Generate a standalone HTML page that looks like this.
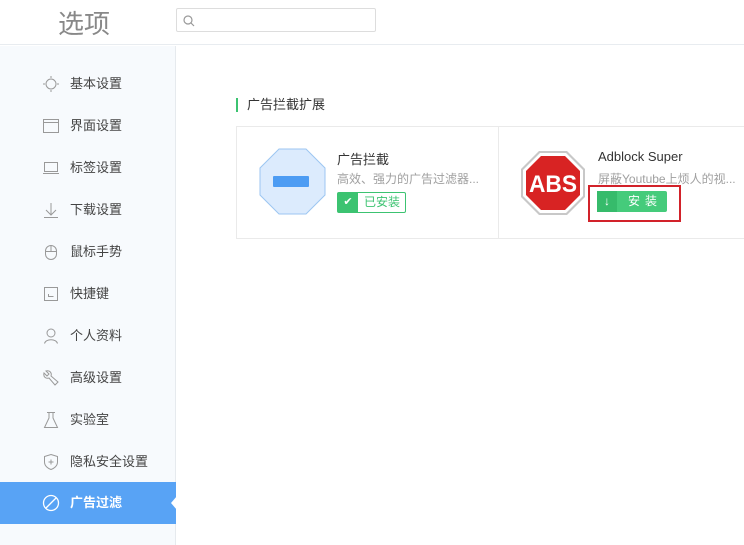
<!DOCTYPE html>
<html><head><meta charset="utf-8"><style>
*{margin:0;padding:0;box-sizing:border-box}
body{width:744px;height:545px;overflow:hidden;background:#fff;font-family:"Liberation Sans","Noto Sans CJK SC",sans-serif;position:relative}
.hdr{position:absolute;left:0;top:0;width:744px;height:45px;border-bottom:1px solid #e8ecf0;background:#fff}
.title{position:absolute;left:58px;top:4px;font-size:26px;color:#888}
.search{position:absolute;left:176px;top:8px;width:200px;height:24px;border:1px solid #ddd;border-radius:2px}
.side{position:absolute;left:0;top:46px;width:176px;height:499px;background:#f7fafd;border-right:1px solid #e6eaee}
.item{position:absolute;left:0;width:176px;height:42px;font-size:13px;color:#444;line-height:42px}
.item span{position:absolute;left:70px}
.item svg{position:absolute;left:42px;top:12px}
.item svg *{stroke:#999}
.act{background:#58a3f5;color:#fff;font-weight:bold}
.act svg *{stroke:#fff}
.arrow{position:absolute;right:-1px;top:14px;width:0;height:0;border-top:7px solid transparent;border-bottom:7px solid transparent;border-right:6px solid #fff}
.sec{position:absolute;left:236px;top:98px;font-size:13px;color:#333;padding-left:9px;border-left:2px solid #3cc371;line-height:14px}
.card{position:absolute;left:236px;top:126px;width:520px;height:113px;border:1px solid #eaeaea}
.div{position:absolute;left:261px;top:0;width:1px;height:111px;background:#eaeaea}
.name{position:absolute;font-size:13px;color:#333}
.desc{position:absolute;font-size:12px;color:#a0a0a0}
</style></head><body>
<div class="hdr"><div class="title">选项</div>
<div class="search"><svg width="14" height="14" style="position:absolute;left:5px;top:5px"><circle cx="6" cy="6" r="4" fill="none" stroke="#999" stroke-width="1.2"/><line x1="9" y1="9" x2="12" y2="12" stroke="#999" stroke-width="1.2"/></svg></div></div>
<div class="side">
<div class="item" style="top:17px"><svg width="18" height="18"><circle cx="9" cy="9" r="5" fill="none"/><g><line x1="9" y1="1" x2="9" y2="3"/><line x1="9" y1="15" x2="9" y2="17"/><line x1="1" y1="9" x2="3" y2="9"/><line x1="15" y1="9" x2="17" y2="9"/></g></svg><span>基本设置</span></div>
<div class="item" style="top:59px"><svg width="18" height="18"><rect x="1.5" y="2.5" width="15" height="13" fill="none"/><line x1="1.5" y1="5.5" x2="16.5" y2="5.5"/></svg><span>界面设置</span></div>
<div class="item" style="top:101px"><svg width="18" height="18"><rect x="2.5" y="3.5" width="13" height="9" fill="none"/><line x1="1" y1="14.5" x2="17" y2="14.5"/></svg><span>标签设置</span></div>
<div class="item" style="top:143px"><svg width="18" height="18"><path d="M9 2V14M4 9L9 14L14 9M2 16.5H16" fill="none"/></svg><span>下载设置</span></div>
<div class="item" style="top:185px"><svg width="18" height="18"><rect x="3.5" y="2.5" width="11" height="14" rx="5.5" fill="none"/><line x1="3.5" y1="8.5" x2="14.5" y2="8.5"/><line x1="9" y1="2.5" x2="9" y2="8.5"/></svg><span>鼠标手势</span></div>
<div class="item" style="top:227px"><svg width="18" height="18"><rect x="2.5" y="2.5" width="13" height="13" fill="none"/><path d="M6.5 9V11.5H11.5" fill="none"/></svg><span>快捷键</span></div>
<div class="item" style="top:269px"><svg width="18" height="18"><circle cx="9" cy="6" r="4" fill="none"/><path d="M2.5 16.5C3.5 11.5 14.5 11.5 15.5 16.5" fill="none"/></svg><span>个人资料</span></div>
<div class="item" style="top:311px"><svg width="18" height="18"><path d="M4 2L7 5L5 7L2 4C1 8 4 10 7 9L13 16L16 13L9 7C10 4 8 1 4 2Z" fill="none"/></svg><span>高级设置</span></div>
<div class="item" style="top:353px"><svg width="18" height="18"><path d="M5 1.5H13M7 1.5V7L2.5 16.5H15.5L11 7V1.5" fill="none"/></svg><span>实验室</span></div>
<div class="item" style="top:395px"><svg width="18" height="18"><path d="M9 1.5L15.5 3.5V9C15.5 13 12 15.5 9 16.5C6 15.5 2.5 13 2.5 9V3.5Z" fill="none"/><path d="M9 6.5V11.5M6.5 9H11.5"/></svg><span>隐私安全设置</span></div>
<div class="item act" style="top:436px"><svg width="18" height="18"><circle cx="9" cy="9" r="7.5" fill="none" stroke-width="1.3"/><line x1="4" y1="14" x2="14" y2="4" stroke-width="1.3"/></svg><span>广告过滤</span><div class="arrow"></div></div>
</div>
<div class="sec">广告拦截扩展</div>
<div class="card">
<div class="div"></div>
<svg width="68" height="68" style="position:absolute;left:22px;top:21px"><polygon points="20,1 47,1 66,20 66,47 47,66 20,66 1,47 1,20" fill="#dcebfd" stroke="#9cc6f2"/><rect x="14" y="28" width="36" height="11" rx="1" fill="#4d9cf3"/></svg>
<div class="name" style="left:100px;top:22px">广告拦截</div>
<div class="desc" style="left:100px;top:43px">高效、强力的广告过滤器...</div>
<div style="position:absolute;left:100px;top:65px;width:69px;height:21px;border:1px solid #3cc371;border-radius:2px;font-size:12px;color:#3cc371;line-height:19px"><div style="position:absolute;left:0;top:0;width:20px;height:19px;background:#3cc371;color:#fff;text-align:center;font-size:11px">✔</div><span style="position:absolute;left:26px">已安装</span></div>
<svg width="66" height="66" style="position:absolute;left:283px;top:23px"><polygon points="19,1 47,1 65,19 65,47 47,65 19,65 1,47 1,19" fill="#c8c8c8"/><polygon points="20,3 46,3 63,20 63,46 46,63 20,63 3,46 3,20" fill="#fff"/><polygon points="21,6 45,6 60,21 60,45 45,60 21,60 6,45 6,21" fill="#d82323"/><text x="33" y="42" text-anchor="middle" font-family="Liberation Sans Narrow, Liberation Sans" font-weight="bold" font-size="24" fill="#fff" textLength="48" lengthAdjust="spacingAndGlyphs">ABS</text></svg>
<div class="name" style="left:361px;top:22px">Adblock Super</div>
<div class="desc" style="left:361px;top:43px">屏蔽Youtube上烦人的视...</div>
<div style="position:absolute;left:351px;top:58px;width:93px;height:37px;border:2px solid #d2222a"></div>
<div style="position:absolute;left:360px;top:64px;width:70px;height:21px;background:#45cb7b;border-radius:2px;color:#fff;font-size:12px;line-height:21px"><div style="position:absolute;left:0;top:0;width:20px;height:21px;background:#36bb6b;text-align:center;font-weight:bold">↓</div><span style="position:absolute;left:31px;letter-spacing:5px">安装</span></div>
</div>
</body></html>
